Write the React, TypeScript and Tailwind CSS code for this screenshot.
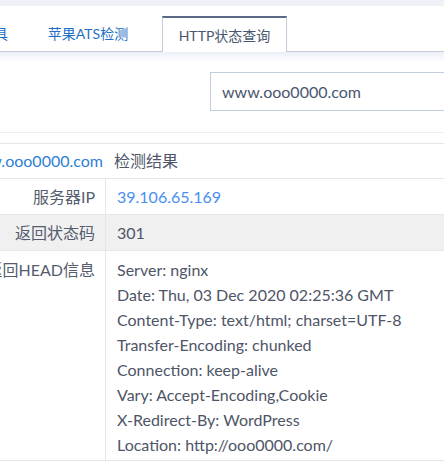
import React from 'react';

const HEAD_LINES = [
  'Server: nginx',
  'Date: Thu, 03 Dec 2020 02:25:36 GMT',
  'Content-Type: text/html; charset=UTF-8',
  'Transfer-Encoding: chunked',
  'Connection: keep-alive',
  'Vary: Accept-Encoding,Cookie',
  'X-Redirect-By: WordPress',
  'Location: http://ooo0000.com/',
];

function App() {
  return (
    <div className="w-[444px] h-[468px] overflow-hidden bg-white font-['Lato','Noto_Sans_CJK_SC',sans-serif]">
      {/* top strip */}
      <div className="h-[6px] bg-[#eef2f7]" />

      {/* tabs */}
      <div className="h-[46px] flex items-end text-[14px]">
        <div className="ml-[-69px] w-[98px] h-[36px] shrink-0 flex items-center justify-center border-b border-[#c5ccd8] text-[#1f6fc6]">
          站长工具
        </div>
        <div className="w-[133px] h-[36px] shrink-0 flex items-center border-b border-[#c5ccd8] text-[#1f6fc6]">
          <span className="w-[118px] text-center">苹果ATS检测</span>
        </div>
        <div className="w-[125px] h-[36px] shrink-0 flex items-center justify-center bg-white border-t-2 border-x border-t-[#5a6986] border-x-[#c5ccd8] text-[#4a5670]">
          HTTP状态查询
        </div>
        <div className="flex-1 h-[36px] border-b border-[#c5ccd8]" />
      </div>
      <div className="h-[10px] bg-linear-to-b from-[#ebf0f7] to-white" />

      {/* search */}
      <div className="h-[71px] pt-[10px] pl-[210px] border-b border-[#eeeeee]">
        <div className="w-[300px] h-[39px] border border-[#c3cde0] flex items-center pl-[11px] text-[16px] text-[#4a5670]">
          www.ooo0000.com
        </div>
      </div>

      {/* result table */}
      <div className="mt-[10px] ml-[-47px] w-[600px] border-t border-[#e6e6e6] text-[16px]">
        <div className="h-[35px] flex items-center pl-[11px] border-b border-[#e6e6e6]">
          <span className="text-[#2f7fd6]">www.ooo0000.com</span>
          <span className="ml-[11px] text-[#4f5668]">检测结果</span>
        </div>
        <div className="h-[36px] flex border-b border-[#e6e6e6]">
          <div className="w-[153px] shrink-0 border-r border-[#e6e6e6] flex items-center justify-end pr-[10px] text-[#555d6e]">
            服务器IP
          </div>
          <div className="flex items-center pl-[11px] text-[#4a8fef]">39.106.65.169</div>
        </div>
        <div className="h-[36px] flex border-b border-[#e6e6e6] bg-[#f0f0f0]">
          <div className="w-[153px] shrink-0 border-r border-[#e6e6e6] flex items-center justify-end pr-[10px] text-[#555d6e]">
            返回状态码
          </div>
          <div className="flex items-center pl-[11px] text-[#4e5567]">301</div>
        </div>
        <div className="flex border-b border-[#e6e6e6]">
          <div className="w-[153px] shrink-0 border-r border-[#e6e6e6] text-right pr-[10px] pt-[6px] leading-[25px] text-[#555d6e] whitespace-nowrap">
            返回HEAD信息
          </div>
          <div className="pl-[11px] pt-[6px] pb-[3px] leading-[25px] text-[#4e5567] whitespace-nowrap">
            {HEAD_LINES.map((line) => (
              <div key={line}>{line}</div>
            ))}
          </div>
        </div>
      </div>
    </div>
  );
}

export default App;
